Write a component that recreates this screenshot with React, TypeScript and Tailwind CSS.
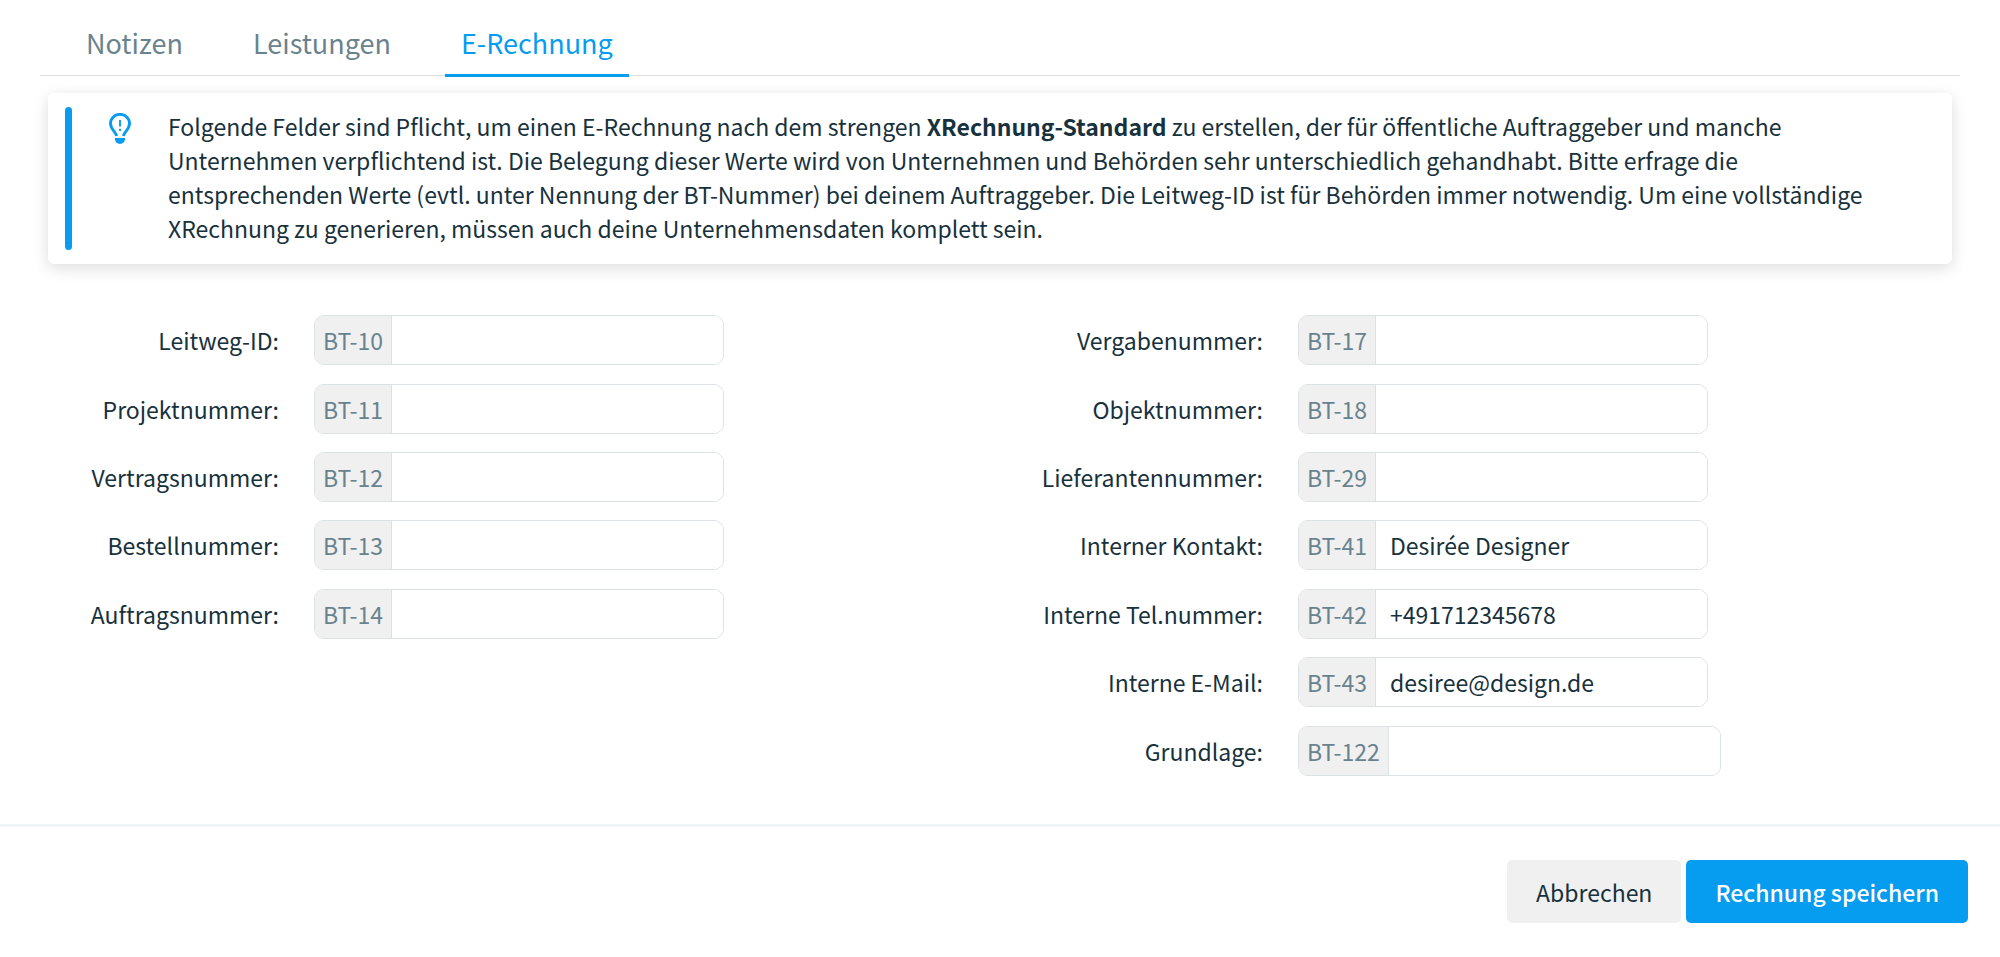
import { useState } from "react";

type Field = { code: string; label: string; value?: string };

const orderFields: Field[] = [
  { code: "BT-10", label: "Leitweg-ID" },
  { code: "BT-11", label: "Projektnummer" },
  { code: "BT-12", label: "Vertragsnummer" },
  { code: "BT-13", label: "Bestellnummer" },
  { code: "BT-14", label: "Auftragsnummer" },
];

const contactFields: Field[] = [
  { code: "BT-17", label: "Vergabenummer" },
  { code: "BT-18", label: "Objektnummer" },
  { code: "BT-29", label: "Lieferantennummer" },
  { code: "BT-41", label: "Interner Kontakt", value: "Desirée Designer" },
  { code: "BT-42", label: "Interne Tel.nummer", value: "+491712345678" },
  { code: "BT-43", label: "Interne E-Mail", value: "desiree@design.de" },
  { code: "BT-122", label: "Grundlage" },
];

const tabs = ["Notizen", "Leistungen", "E-Rechnung"];

function BulbIcon() {
  return (
    <svg viewBox="0 0 22 31" className="h-[31px] w-[22px] shrink-0" fill="none" aria-hidden="true">
      <path
        d="M7.6 23C7 18.6 1.5 16.6 1.5 10.6a9.5 9.3 0 0 1 19 0C20.5 16.6 15 18.6 14.4 23"
        stroke="#069df0"
        strokeWidth="2.9"
      />
      <path d="M11 7v6.4M11 15.8v2.2" stroke="#069df0" strokeWidth="1.9" />
      <path d="M6 25h10v1.2a5 4.8 0 0 1-10 0z" fill="#069df0" />
    </svg>
  );
}

function FieldRow({ code, label, value = "" }: Field) {
  const [text, setText] = useState(value);
  return (
    <div className="flex items-center gap-[35px]">
      <label htmlFor={code} className="w-[263px] shrink-0 text-right">
        {label}:
      </label>
      <div className="flex h-[50px] overflow-hidden rounded-[10px] border border-[#dce1e4]">
        <span className="flex items-center border-r border-[#dce1e4] bg-[#f0f0f0] px-2 text-[#69838e]">
          {code}
        </span>
        <input
          id={code}
          type="text"
          value={text}
          onChange={(e) => setText(e.target.value)}
          className="w-[331px] bg-white px-[14px] outline-none"
        />
      </div>
    </div>
  );
}

function FieldColumn({ fields }: { fields: Field[] }) {
  return (
    <div className="grid min-h-[479px] grid-rows-7">
      {fields.map((field) => (
        <FieldRow key={field.code} {...field} />
      ))}
    </div>
  );
}

export default function App() {
  const [active, setActive] = useState("E-Rechnung");
  return (
    <main className="min-h-screen bg-white font-['Noto_Sans_CJK_SC',sans-serif] text-[23px] leading-[34px] text-[#17313d]">
      <nav className="mx-10 flex h-[76px] gap-[38px] border-b border-[#dcdedf] px-[30px] text-[27px]">
        {tabs.map((tab) => (
          <button
            key={tab}
            type="button"
            onClick={() => setActive(tab)}
            className={
              tab === active
                ? "-mb-[2px] border-b-3 border-[#069df0] px-4 pt-3 text-[#069df0]"
                : "-mb-[2px] border-b-3 border-transparent px-4 pt-3 text-[#69838e]"
            }
          >
            {tab}
          </button>
        ))}
      </nav>

      <section className="mx-12 mt-[17px] flex rounded-[6px] bg-white py-[14px] pr-[80px] pl-[17px] shadow-[0_4px_16px_rgba(0,0,0,0.14)]">
        <div className="w-[7px] shrink-0 rounded-full bg-[#069df0]" />
        <div className="pt-[6px] pr-[37px] pl-[37px]">
          <BulbIcon />
        </div>
        <p className="pt-[2px] pb-[5px]">
          Folgende Felder sind Pflicht, um einen E-Rechnung nach dem strengen{" "}
          <strong className="font-bold">XRechnung-Standard</strong> zu erstellen, der für öffentliche Auftraggeber und
          manche Unternehmen verpflichtend ist. Die Belegung dieser Werte wird von Unternehmen und Behörden sehr
          unterschiedlich gehandhabt. Bitte erfrage die entsprechenden Werte (evtl. unter Nennung der BT-Nummer) bei
          deinem Auftraggeber. Die Leitweg-ID ist für Behörden immer notwendig. Um eine vollständige XRechnung zu
          generieren, müssen auch deine Unternehmensdaten komplett sein.
        </p>
      </section>

      <form onSubmit={(e) => e.preventDefault()}>
        <div className="grid grid-cols-2 px-4 pt-[42px] pb-[39px]">
          <FieldColumn fields={orderFields} />
          <FieldColumn fields={contactFields} />
        </div>
        <footer className="flex justify-end gap-[5px] border-t-3 border-[#eff4f7] px-8 pt-[33px] pb-8">
          <button type="button" className="h-[63px] rounded-[5px] bg-[#f0f0f0] px-[29px]">
            Abbrechen
          </button>
          <button type="submit" className="h-[63px] rounded-[5px] bg-[#069df0] px-[29px] font-medium text-white">
            Rechnung speichern
          </button>
        </footer>
      </form>
    </main>
  );
}
